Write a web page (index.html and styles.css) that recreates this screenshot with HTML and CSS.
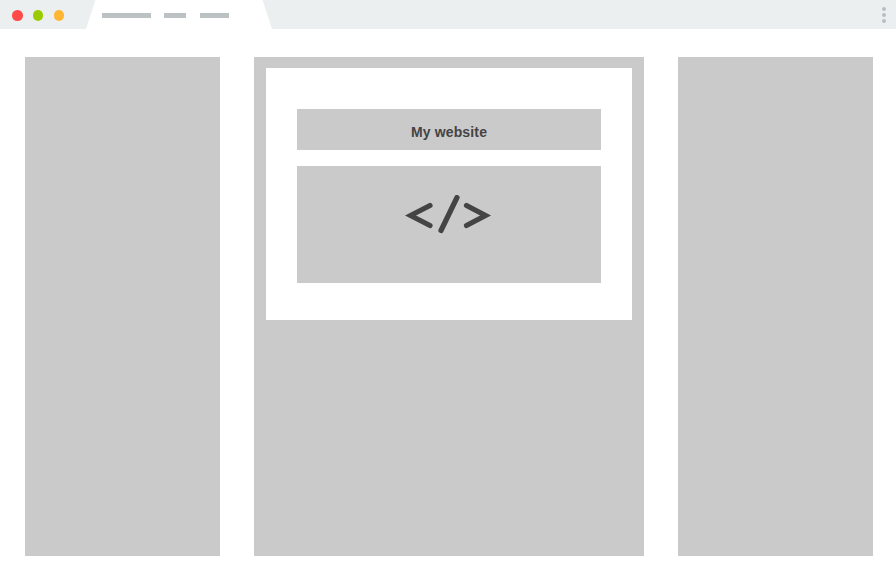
FILE: index.html
```html
<!DOCTYPE html>
<html lang="en">
<head>
    <meta charset="UTF-8">
    <meta name="viewport" content="width=device-width, initial-scale=1.0">
    <title>My website</title>
    <link rel="stylesheet" href="styles.css">
</head>
<body>
    <header class="browser-bar">
        <div class="lights">
            <span class="light light-red"></span>
            <span class="light light-green"></span>
            <span class="light light-yellow"></span>
        </div>
        <div class="tab">
            <span class="tab-line tab-line-long"></span>
            <span class="tab-line tab-line-short"></span>
            <span class="tab-line tab-line-mid"></span>
        </div>
        <div class="menu-dots">
            <span></span>
            <span></span>
            <span></span>
        </div>
    </header>
    <main class="columns">
        <div class="side-col"></div>
        <div class="center-col">
            <div class="card">
                <div class="card-title">My website</div>
                <div class="card-code">
                    <svg class="code-icon" width="88" height="40" viewBox="0 0 88 40" fill="none">
                        <path d="M25 10.5 L5.5 20.5 L25 30.5" stroke="#444444" stroke-width="5.2" stroke-linecap="round"/>
                        <path d="M52 2.5 L36 35.5" stroke="#444444" stroke-width="5.2" stroke-linecap="round"/>
                        <path d="M61.5 10.5 L80.5 20.5 L61.5 30.5" stroke="#444444" stroke-width="5.2" stroke-linecap="round"/>
                    </svg>
                </div>
            </div>
        </div>
        <div class="side-col"></div>
    </main>
</body>
</html>
```

FILE: styles.css
```css
body {
    font-family: 'Liberation Sans', Arial, sans-serif;
    margin: 0;
    padding: 0;
    background-color: #ffffff;
}
.browser-bar {
    display: flex;
    align-items: stretch;
    height: 29px;
    background-color: #ebeff0;
}
.lights {
    display: flex;
    align-items: center;
    gap: 10.2px;
    width: 86px;
    padding-left: 12px;
    padding-top: 2px;
    box-sizing: border-box;
}
.light {
    width: 10.6px;
    height: 10.6px;
    border-radius: 50%;
}
.light-red {
    background-color: #ff4a4a;
}
.light-green {
    background-color: #99cc00;
}
.light-yellow {
    background-color: #ffb733;
}
.tab {
    display: flex;
    align-items: center;
    width: 186px;
    padding-left: 16px;
    padding-top: 2px;
    box-sizing: border-box;
    background-color: #ffffff;
    clip-path: polygon(9.5px 0, 176.5px 0, 186px 100%, 0 100%);
}
.tab-line {
    height: 5px;
    background-color: #bcc1c4;
}
.tab-line-long {
    width: 49px;
    margin-right: 13px;
}
.tab-line-short {
    width: 22px;
    margin-right: 14px;
}
.tab-line-mid {
    width: 29px;
}
.menu-dots {
    display: flex;
    flex-direction: column;
    align-items: center;
    gap: 2px;
    margin-left: auto;
    margin-right: 10.5px;
    padding-top: 7px;
}
.menu-dots span {
    width: 4px;
    height: 4px;
    border-radius: 50%;
    background-color: #b9bdc0;
}
.columns {
    display: flex;
    gap: 34px;
    height: 499px;
    padding: 28px 23px 0 25px;
}
.side-col {
    width: 195px;
    background-color: #cacaca;
}
.center-col {
    width: 390px;
    padding: 11px 12px 0;
    box-sizing: border-box;
    background-color: #cacaca;
}
.card {
    display: flex;
    flex-direction: column;
    gap: 16px;
    height: 252px;
    padding: 41px 31px 37px;
    box-sizing: border-box;
    background-color: #ffffff;
}
.card-title {
    height: 41px;
    padding-top: 15px;
    box-sizing: border-box;
    background-color: #cacaca;
    color: #444444;
    font-size: 14px;
    font-weight: bold;
    letter-spacing: 0.15px;
    line-height: 16px;
    text-align: center;
}
.card-code {
    display: flex;
    justify-content: center;
    align-items: flex-start;
    height: 117px;
    padding-top: 29px;
    box-sizing: border-box;
    background-color: #cacaca;
}
```
